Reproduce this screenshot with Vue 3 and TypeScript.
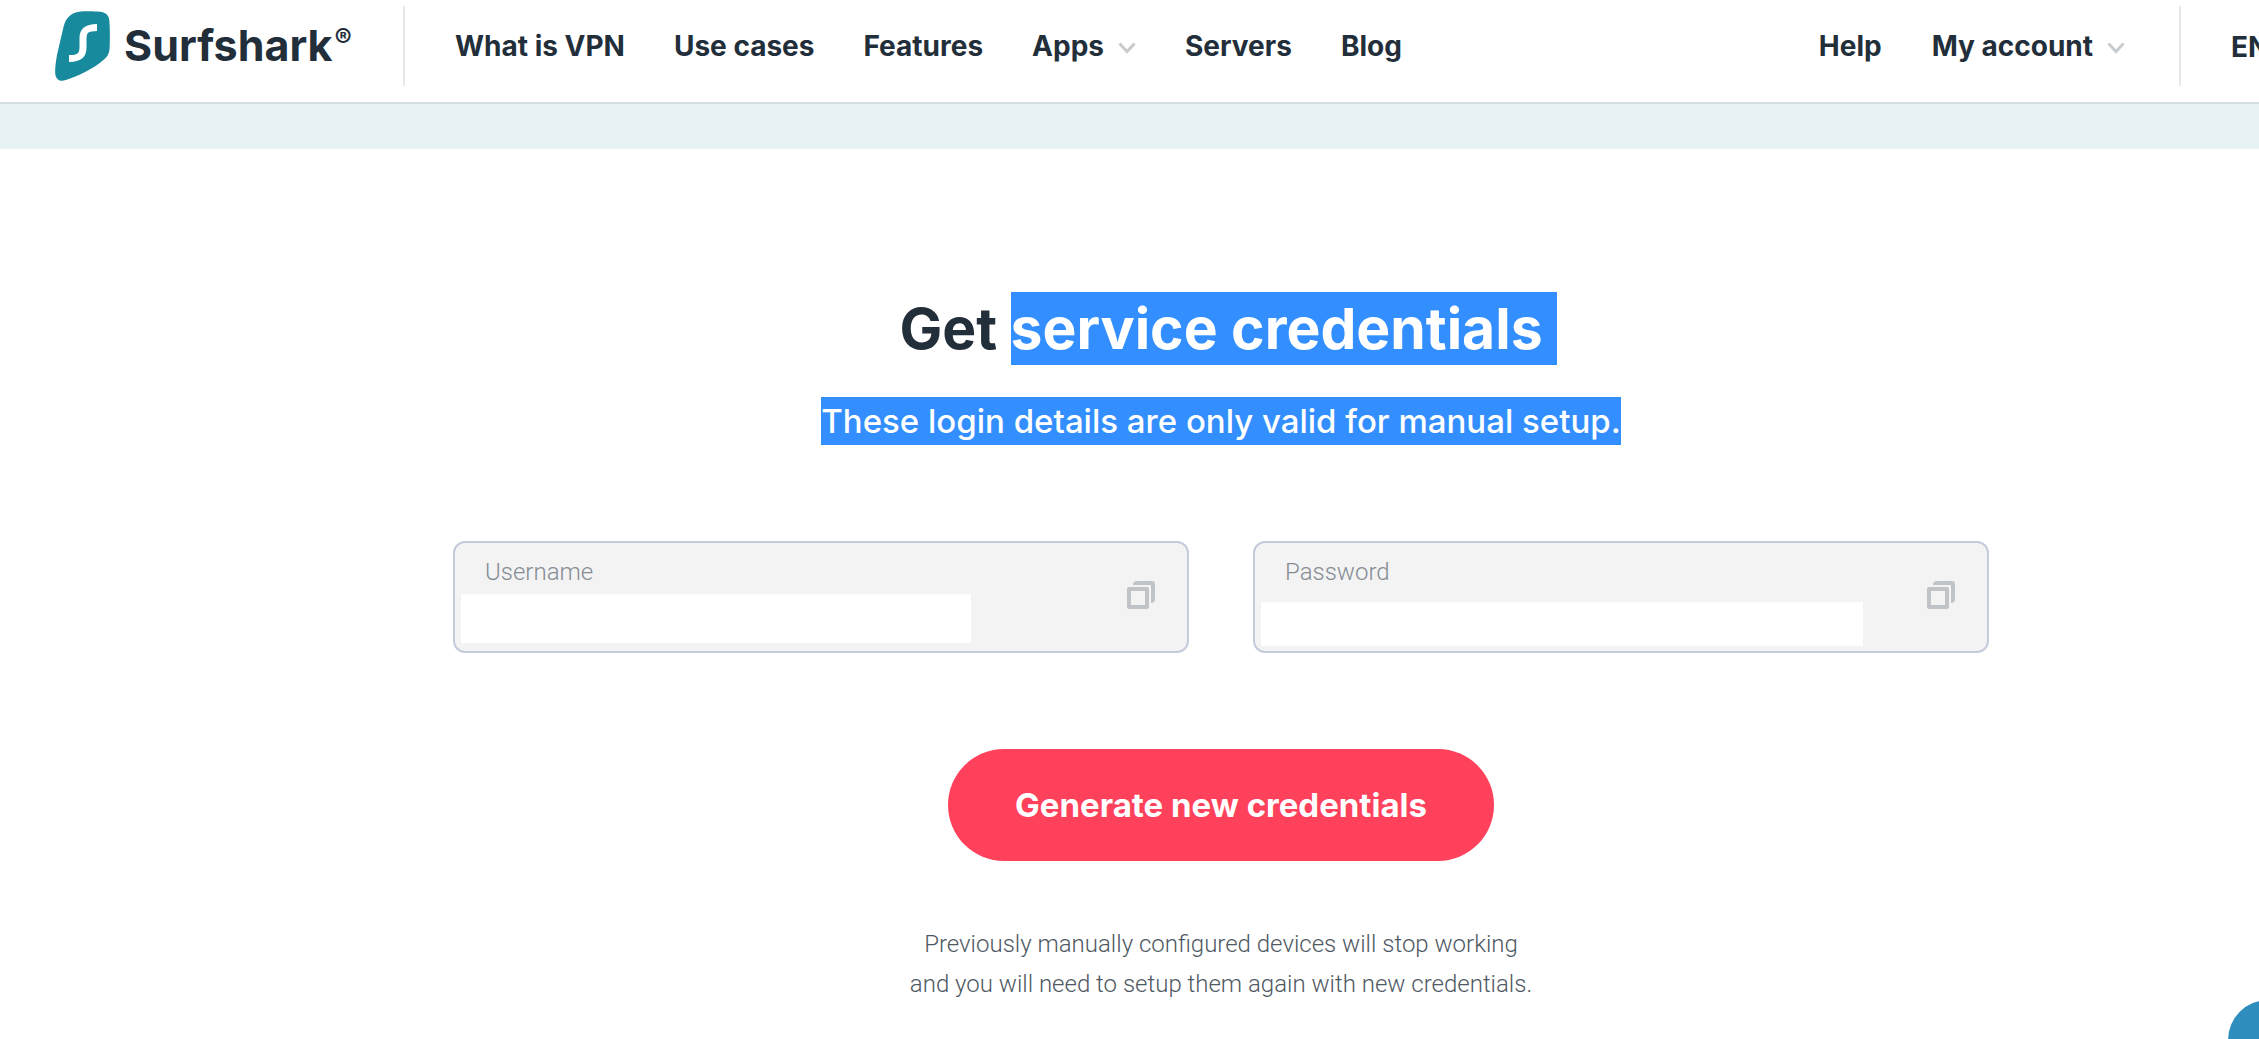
<script setup lang="ts">
interface NavItem {
  label: string
  menu?: boolean
}

interface Credential {
  id: string
  label: string
}

const mainLinks: NavItem[] = [
  { label: 'What is VPN' },
  { label: 'Use cases' },
  { label: 'Features' },
  { label: 'Apps', menu: true },
  { label: 'Servers' },
  { label: 'Blog' },
]

const sideLinks: NavItem[] = [{ label: 'Help' }, { label: 'My account', menu: true }]

const credentials: Credential[] = [
  { id: 'username', label: 'Username' },
  { id: 'password', label: 'Password' },
]
</script>

<template>
  <div class="page">
    <header class="header">
      <a class="logo" href="#" aria-label="Surfshark home">
        <svg class="logo-mark" viewBox="0 0 55 70" aria-hidden="true">
          <path
            d="M28 0.3C34 -0.1 40 0.3 45 0.7C51 1.2 54 4.5 54.4 10C55 20 55 29 54.6 37C54.3 42 53 45 49 48.5C38 58 24 65 10 69.3C4 71 0.5 68 0.2 62C0 56 1 50 2 44L8.500 16C11 6 17 0.8 28 0.3Z"
            fill="#178a9e"
          />
          <path
            d="M42 16.500C31 16.500 28 20 28 27V36C28 44 25 47.500 14 47.500"
            fill="none"
            stroke="#fff"
            stroke-width="7"
          />
        </svg>
        <span class="wordmark">Surfshark</span>
        <span class="registered">®</span>
      </a>
      <nav class="nav main-nav" aria-label="Main">
        <a v-for="item in mainLinks" :key="item.label" class="nav-link" href="#">
          {{ item.label }}
          <svg v-if="item.menu" class="chevron" viewBox="0 0 18 12" aria-hidden="true">
            <path d="M1.500 1.500L9 9.500L16.500 1.500" />
          </svg>
        </a>
      </nav>
      <nav class="nav side-nav" aria-label="Account">
        <a v-for="item in sideLinks" :key="item.label" class="nav-link" href="#">
          {{ item.label }}
          <svg v-if="item.menu" class="chevron" viewBox="0 0 18 12" aria-hidden="true">
            <path d="M1.500 1.500L9 9.500L16.500 1.500" />
          </svg>
        </a>
      </nav>
      <div class="language"><a class="nav-link" href="#">EN</a></div>
    </header>
    <div class="band"></div>

    <main class="content">
      <h1 class="title">Get <span class="selected">service credentials</span></h1>
      <p class="subtitle"><span class="selected">These login details are only valid for manual setup.</span></p>

      <div class="fields">
        <div v-for="field in credentials" :key="field.id" class="field" :class="field.id">
          <div class="entry">
            <label :for="field.id">{{ field.label }}</label>
            <input :id="field.id" type="text" readonly />
          </div>
          <button class="copy" type="button" :aria-label="`Copy ${field.label}`">
            <svg viewBox="0 0 28 28" aria-hidden="true">
              <path
                fill-rule="evenodd"
                d="M2 6H20Q22 6 22 8V26Q22 28 20 28H2Q0 28 0 26V8Q0 6 2 6ZM4 10V24H18V10Z"
              />
              <path d="M6 4Q6 0 10 0H25Q28 0 28 3V18Q28 22 24 22V4Z" />
            </svg>
          </button>
        </div>
      </div>

      <button class="generate" type="button">Generate new credentials</button>
      <p class="note">
        Previously manually configured devices will stop working<br />
        and you will need to setup them again with new credentials.
      </p>
    </main>
    <button class="chat" type="button" aria-label="Open chat"></button>
  </div>
</template>

<style>
body {
  background: #fff;
  overflow: hidden;
}
</style>

<style scoped>
.page {
  color: #222e3a;
  font-family: Inter, sans-serif;
}

.header {
  display: flex;
  align-items: flex-start;
  box-sizing: border-box;
  height: 104px;
  padding-top: 6px;
  border-bottom: 2px solid #d3dee1;
}

.logo {
  display: flex;
  align-items: center;
  box-sizing: border-box;
  flex: none;
  width: 405px;
  height: 80px;
  padding-left: 55px;
  border-right: 2px solid #e8e8e8;
  color: inherit;
  text-decoration: none;
}

.logo-mark {
  width: 55px;
  height: 70px;
}

.wordmark {
  margin-left: 14px;
  padding-bottom: 2px;
  font-size: 43px;
  font-weight: 700;
  line-height: 78px;
}

.registered {
  align-self: flex-start;
  margin: 16px 0 0 2px;
  font-size: 26px;
  font-weight: 700;
  line-height: 32px;
}

.nav {
  display: flex;
  gap: 50px;
  height: 80px;
  white-space: nowrap;
}

.main-nav {
  flex: 1;
  gap: 49px;
  padding-left: 50px;
}

.side-nav {
  padding-right: 54px;
  border-right: 2px solid #e8e8e8;
}

.nav-link {
  display: flex;
  align-items: center;
  color: inherit;
  font-size: 28px;
  font-weight: 700;
  line-height: 82px;
  text-decoration: none;
}

.chevron {
  width: 18px;
  height: 12px;
  margin: 4px 0 0 14px;
  fill: none;
  stroke: #c8cbce;
  stroke-width: 3;
}

.language {
  flex: none;
  box-sizing: border-box;
  width: 78px;
  padding-left: 50px;
  overflow: hidden;
}

.band {
  height: 45px;
  background: #e6f2f4;
}

.content {
  display: flex;
  flex-direction: column;
  align-items: center;
  padding: 143px 0 0 183px;
}

.title,
.subtitle,
.note {
  margin: 0;
}

.selected {
  display: inline-block;
  background: #338fff;
  color: #fff;
}

.title {
  font-size: 57px;
  font-weight: 700;
  line-height: 73px;
}

/* The highlight runs past the last word without shifting the centred text. */
.title .selected {
  margin-right: -14px;
  padding-right: 14px;
}

.subtitle {
  margin-top: 32px;
  font-size: 33px;
  font-weight: 500;
  line-height: 48px;
}

.fields {
  display: flex;
  justify-content: center;
  gap: 64px;
  width: 100%;
  margin-top: 96px;
}

.field {
  display: flex;
  align-items: center;
  justify-content: space-between;
  box-sizing: border-box;
  flex: 0 1 736px;
  height: 112px;
  padding: 0 32px 0 6px;
  border: 2px solid #c4cbda;
  border-radius: 12px;
  background: #f3f3f3;
}

.entry {
  display: flex;
  flex-direction: column;
  align-self: stretch;
  width: 510px;
}

.password .entry {
  width: 602px;
}

.entry label {
  padding: 14px 0 0 24px;
  color: #858c94;
  font-family: Roboto, sans-serif;
  font-size: 24px;
  font-weight: 300;
  line-height: 30px;
}

.entry input {
  height: 49px;
  margin-top: 7px;
  padding: 0 24px;
  border: 0;
  background: #fff;
  font: 24px Roboto, sans-serif;
}

.password input {
  height: 44px;
  margin-top: 15px;
}

.copy {
  width: 28px;
  height: 32px;
  padding: 0 0 4px;
  border: 0;
  background: none;
}

.copy svg {
  display: block;
  width: 28px;
  height: 28px;
  fill: #c0c4c9;
}

.generate {
  height: 112px;
  margin-top: 96px;
  padding: 0 67px;
  border: 0;
  border-radius: 56px;
  background: #ff415c;
  color: #fff;
  font: 700 33px Inter, sans-serif;
}

.note {
  margin-top: 63px;
  color: #4f5963;
  font-family: Roboto, sans-serif;
  font-size: 24px;
  font-weight: 300;
  line-height: 40px;
  text-align: center;
}

.chat {
  position: fixed;
  right: -49px;
  bottom: -41px;
  width: 80px;
  height: 80px;
  border: 0;
  border-radius: 50%;
  background: #2f8ebd;
}
</style>
